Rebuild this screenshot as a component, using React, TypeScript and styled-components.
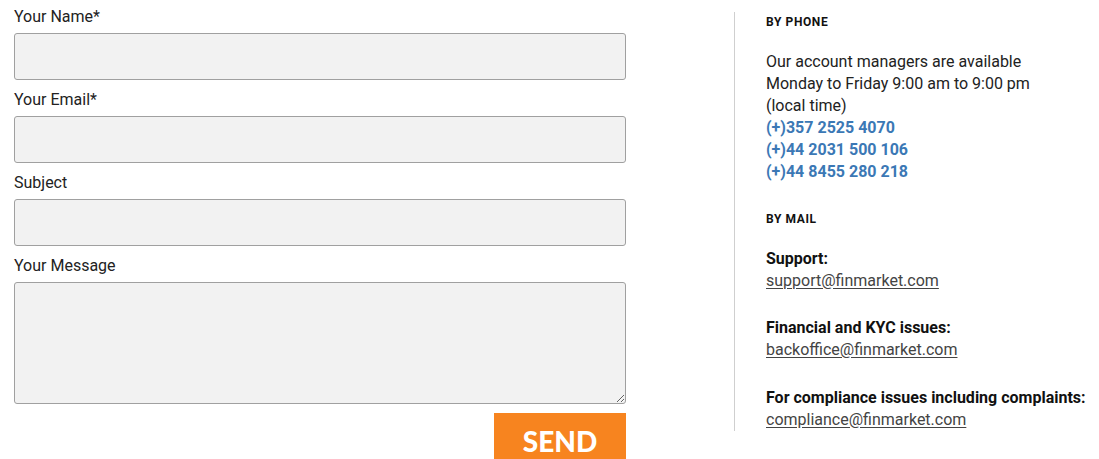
import React from "react"
import styled, { createGlobalStyle } from "styled-components"

const GlobalStyle = createGlobalStyle`
body {
  margin: 0;
  background: #fff;
  font-family: Roboto, "Liberation Sans", sans-serif;
  color: #222;
}
`

const Page = styled.div`
display: flex;
flex-direction: row;
align-items: flex-start;
padding: 6px 0 0 14px;
`

const Form = styled.form`
width: 612px;
display: flex;
flex-direction: column;
`

const Label = styled.label`
font-size: 16px;
line-height: 22px;
color: #222;
margin: 0 0 5px 0;
&:not(:first-child) {
  margin-top: 9px;
}
`

const Input = styled.input`
box-sizing: border-box;
height: 47px;
width: 100%;
background: #f2f2f2;
border: 1px solid #a0a0a0;
border-radius: 3px;
font-family: inherit;
font-size: 15px;
padding: 0 10px;
`

const Message = styled.textarea`
box-sizing: border-box;
height: 122px;
width: 100%;
background: #f2f2f2;
border: 1px solid #a0a0a0;
border-radius: 3px;
font-family: inherit;
font-size: 15px;
padding: 10px;
resize: vertical;
`

const ButtonRow = styled.div`
display: flex;
justify-content: flex-end;
margin-top: 9px;
`

const SendButton = styled.button`
width: 132px;
height: 56px;
border: none;
background: #f7841f;
color: #fff;
font-family: Lato, "Liberation Sans", sans-serif;
font-weight: 900;
font-size: 28px;
padding: 0;
display: flex;
align-items: flex-start;
justify-content: center;
line-height: 56px;
`

const Contacts = styled.aside`
margin: 6px 0 0 108px;
padding: 3px 0 0 31px;
border-left: 1px solid #cfcfcf;
height: 416px;
font-size: 16px;
line-height: 22px;
color: #222;
`

const Heading = styled.h4<{ $top?: number }>`
margin: ${(p) => p.$top ?? 0}px 0 22px 0;
font-size: 12px;
line-height: 14px;
font-weight: 700;
letter-spacing: 0.6px;
color: #111;
`

const Text = styled.p`
margin: 0;
`

const Phone = styled.a`
display: block;
color: #3b78b5;
font-weight: 700;
text-decoration: none;
`

const MailBlock = styled.div<{ $top?: number }>`
margin-top: ${(p) => p.$top ?? 0}px;
`

const MailTitle = styled.div`
font-weight: 700;
color: #111;
`

const MailLink = styled.a`
color: #444;
text-decoration: underline;
text-underline-offset: 2px;
`

const App = () => {
    return (
        <>
            <GlobalStyle />
            <Page>
                <Form onSubmit={(e) => e.preventDefault()}>
                    <Label>Your Name*</Label>
                    <Input type="text" />
                    <Label>Your Email*</Label>
                    <Input type="email" />
                    <Label>Subject</Label>
                    <Input type="text" />
                    <Label>Your Message</Label>
                    <Message />
                    <ButtonRow>
                        <SendButton type="submit">SEND</SendButton>
                    </ButtonRow>
                </Form>
                <Contacts>
                    <Heading>BY PHONE</Heading>
                    <Text>Our account managers are available</Text>
                    <Text>Monday to Friday 9:00 am to 9:00 pm</Text>
                    <Text>(local time)</Text>
                    <Phone href="#">(+)357 2525 4070</Phone>
                    <Phone href="#">(+)44 2031 500 106</Phone>
                    <Phone href="#">(+)44 8455 280 218</Phone>
                    <Heading $top={29}>BY MAIL</Heading>
                    <MailBlock>
                        <MailTitle>Support:</MailTitle>
                        <MailLink href="#">support@finmarket.com</MailLink>
                    </MailBlock>
                    <MailBlock $top={25}>
                        <MailTitle>Financial and KYC issues:</MailTitle>
                        <MailLink href="#">backoffice@finmarket.com</MailLink>
                    </MailBlock>
                    <MailBlock $top={26}>
                        <MailTitle>For compliance issues including complaints:</MailTitle>
                        <MailLink href="#">compliance@finmarket.com</MailLink>
                    </MailBlock>
                </Contacts>
            </Page>
        </>
    )
}

export default App
